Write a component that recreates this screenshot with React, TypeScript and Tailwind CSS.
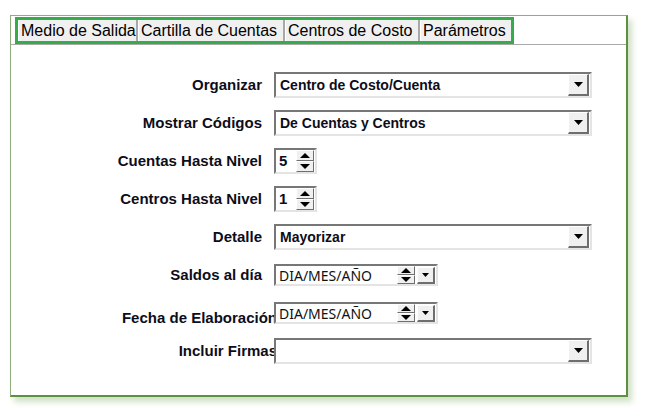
import React from 'react';

const labelFont = { fontFamily: '"Liberation Sans", Arial, sans-serif' };

const Tri: React.FC<{ dir: 'up' | 'down'; w?: number; h?: number }> = ({ dir, w = 8, h = 4 }) => (
  <svg width={w} height={h} viewBox={`0 0 ${w} ${h}`}>
    {dir === 'down' ? (
      <polygon points={`0,0 ${w},0 ${w / 2},${h}`} fill="#000" />
    ) : (
      <polygon points={`0,${h} ${w},${h} ${w / 2},0`} fill="#000" />
    )}
  </svg>
);

const DropBtn: React.FC<{ small?: boolean }> = ({ small }) => (
  <div
    className={`flex items-center justify-center bg-[#f0f0f0] border-t border-l border-white border-b-2 border-r-2 border-b-[#6e6e6e] border-r-[#6e6e6e] ${
      small ? 'w-[18px] h-[17px]' : 'w-[21px] h-[22px]'
    }`}
  >
    <Tri dir="down" w={small ? 7 : 9} h={small ? 4 : 5} />
  </div>
);

const SpinBtns: React.FC<{ h: number }> = ({ h }) => (
  <div className="flex flex-col w-[18px]">
    {(['up', 'down'] as const).map((d) => (
      <div
        key={d}
        style={{ height: h }}
        className="flex items-center justify-center bg-[#f0f0f0] border-t border-l border-white border-b border-r border-b-[#6e6e6e] border-r-[#6e6e6e]"
      >
        <Tri dir={d} w={10} h={5} />
      </div>
    ))}
  </div>
);

const Inset: React.FC<{ className: string; children?: React.ReactNode }> = ({ className, children }) => (
  <div
    className={`relative z-10 flex items-center bg-white border-t-2 border-l-2 border-t-[#777] border-l-[#777] border-b-2 border-r-2 border-b-[#e4e4e4] border-r-[#e4e4e4] ${className}`}
  >
    {children}
  </div>
);

const Select: React.FC<{ value: string }> = ({ value }) => (
  <Inset className="w-[318px] h-[26px] pr-[1px]">
    <span className="flex-1 pl-[4px] text-[14px] font-bold text-[#0d0d1a]" style={labelFont}>
      {value}
    </span>
    <DropBtn />
  </Inset>
);

const Spin: React.FC<{ value: string }> = ({ value }) => (
  <Inset className="w-[43px] h-[26px] pr-[1px]">
    <span className="flex-1 pl-[3px] text-[15px] font-bold text-[#0d0d1a]" style={labelFont}>
      {value}
    </span>
    <SpinBtns h={11} />
  </Inset>
);

const DateBox: React.FC = () => (
  <Inset className="w-[164px] h-[22px] pr-[1px]">
    <span className="flex-1 pl-[3px] text-[14px] text-[#111]" style={{ fontFamily: '"Noto Sans", "Open Sans", sans-serif' }}>
      DIA/MES/AÑO
    </span>
    <SpinBtns h={9} />
    <div className="ml-[2px]">
      <DropBtn small />
    </div>
  </Inset>
);

const rows: { label: string; field: React.ReactNode; spill?: boolean; drop?: boolean }[] = [
  { label: 'Organizar', field: <Select value="Centro de Costo/Cuenta" /> },
  { label: 'Mostrar Códigos', field: <Select value="De Cuentas y Centros" /> },
  { label: 'Cuentas Hasta Nivel', field: <Spin value="5" /> },
  { label: 'Centros Hasta Nivel', field: <Spin value="1" /> },
  { label: 'Detalle', field: <Select value="Mayorizar" /> },
  { label: 'Saldos al día', field: <DateBox /> },
  { label: 'Fecha de Elaboración', field: <DateBox />, spill: true, drop: true },
  { label: 'Incluir Firmas', field: <Select value="" />, spill: true },
];

const tabs = [
  { name: 'Medio de Salida', w: 'w-[120px]' },
  { name: 'Cartilla de Cuentas', w: 'w-[147px]' },
  { name: 'Centros de Costo', w: 'w-[135px]' },
  { name: 'Parámetros', w: 'w-[91px]' },
];

const App: React.FC = () => {
  return (
    <div className="w-[648px] h-[411px] bg-white pt-[15px] pl-[10px]">
      <div className="w-[618px] h-[382px] bg-white border-t border-l border-[#8fae7c] border-r-2 border-b-2 border-r-[#5e9040] border-b-[#5e9040] shadow-[4px_5px_6px_rgba(120,165,95,0.35)]">
        {/* Tab strip */}
        <div className="border-b border-[#a9a9a9]">
          <div className="ml-[4px] mt-[1px] inline-flex h-[27px] border-[3px] border-[#35ab4b]">
            {tabs.map((t, i) => (
              <div
                key={t.name}
                className={`${t.w} flex items-center pl-[2px] bg-[#f0f0f0] border-l border-white ${
                  i < tabs.length - 1 ? 'border-r-2 border-r-[#a8a8a8]' : ''
                } text-[16px] text-black whitespace-nowrap overflow-hidden`}
                style={labelFont}
              >
                {t.name}
              </div>
            ))}
          </div>
        </div>

        {/* Form */}
        <div className="mt-[21px] flex flex-col">
          {rows.map((r) => (
            <div key={r.label} className="flex items-center h-[38px]">
              <div className="w-[251px] flex justify-end">
                <span
                  className={`whitespace-nowrap text-[15px] font-bold text-[#0d0d1a] ${r.spill ? 'mr-[-15px]' : ''} ${
                    r.drop ? 'translate-y-[5px]' : ''
                  }`}
                  style={labelFont}
                >
                  {r.label}
                </span>
              </div>
              <div className="ml-[12px]">{r.field}</div>
            </div>
          ))}
        </div>
      </div>
    </div>
  );
};

export default App;
